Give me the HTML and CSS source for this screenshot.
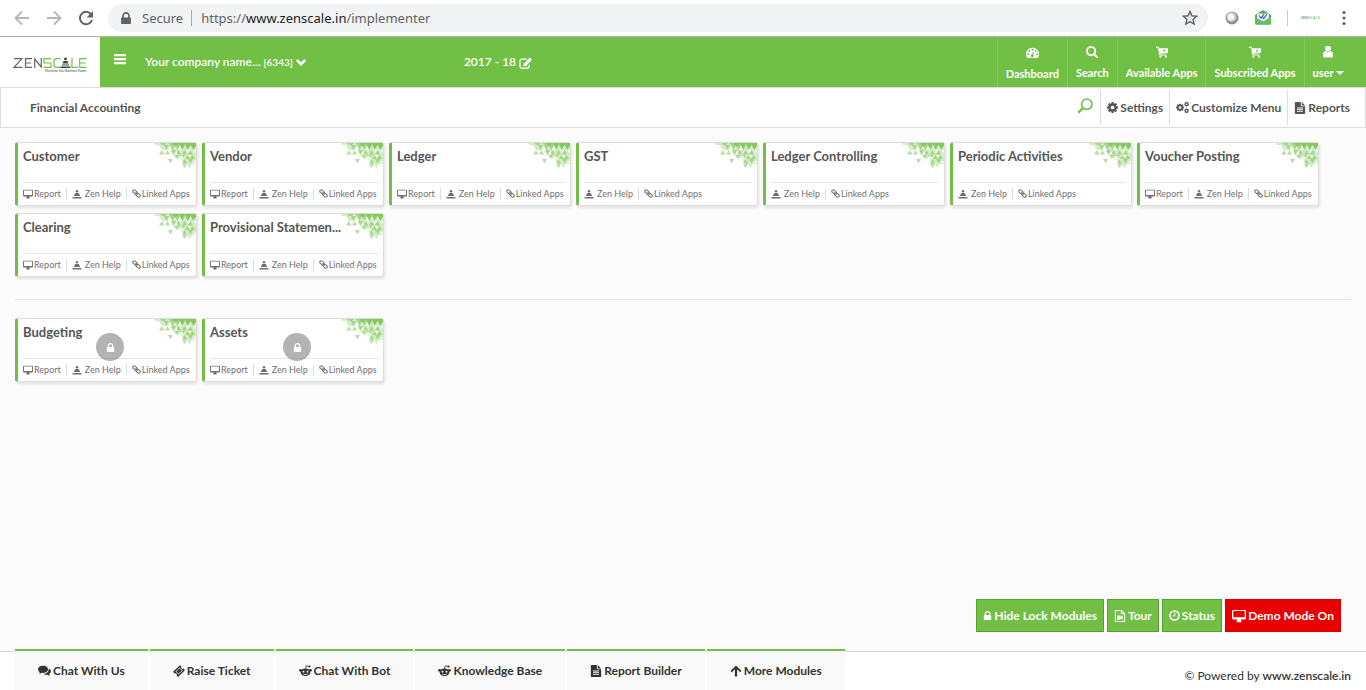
FILE: index.html
```html
<!DOCTYPE html>
<html lang="en">

<head>
    <meta charset="UTF-8">
    <meta name="viewport" content="width=device-width, initial-scale=1.0">
    <title>Zenscale - Financial Accounting</title>

    <link rel="stylesheet" href="styles.css">
</head>

<body>
    <!-- Icon set -->
    <svg class="sprite" aria-hidden="true">
        <symbol id="i-back" viewBox="0 0 16 16"><path d="M15 8H2M8 1.5 1.5 8 8 14.500" fill="none" stroke="currentColor" stroke-width="1.800"/></symbol>
        <symbol id="i-forward" viewBox="0 0 16 16"><path d="M1 8h13M8 1.500 14.500 8 8 14.500" fill="none" stroke="currentColor" stroke-width="1.800"/></symbol>
        <symbol id="i-reload" viewBox="0 0 16 16"><path d="M13.200 4.500A6.200 6.200 0 1 0 14 10" fill="none" stroke="currentColor" stroke-width="2"/><path d="M15 1v6.500H8.500z"/></symbol>
        <symbol id="i-star" viewBox="0 0 16 16"><path d="m8 1.500 1.900 4.300 4.700.5-3.500 3.100 1 4.600L8 11.600 3.900 14l1-4.600-3.500-3.100 4.700-.5z" fill="none" stroke="currentColor" stroke-width="1.400"/></symbol>
        <symbol id="i-ball" viewBox="0 0 14 14"><circle cx="7" cy="7" r="6.500" fill="#8d8d8d"/><circle cx="6.500" cy="6" r="5" fill="#c9c9c9"/><circle cx="6" cy="6" r="3.300" fill="#f6f6f6"/></symbol>
        <symbol id="i-mail" viewBox="0 0 16 16"><path d="M0 5 8 0l8 5v8.500q0 1-1 1H1q-1 0-1-1z" fill="#4cae50"/><path d="M2 3.500h12v6l-6 3-6-3z" fill="#e9ecf7"/><path d="m4 5.500 2 2.500 3-4M7.500 7 8.700 8.500l3.300-4.500" fill="none" stroke="#4a5bd0" stroke-width="1.200"/><path d="m0 7 8 4.500L16 7v6.500q0 1-1 1H1q-1 0-1-1z" fill="#5fbf63"/></symbol>
        <symbol id="i-dots" viewBox="0 0 4 16"><circle cx="2" cy="2.500" r="1.600"/><circle cx="2" cy="8" r="1.600"/><circle cx="2" cy="13.500" r="1.600"/></symbol>
        <symbol id="i-bars" viewBox="0 0 12 12"><path d="M0 1h12v2.300H0zM0 5h12v2.300H0zM0 9h12v2.300H0z"/></symbol>
        <symbol id="i-chevron" viewBox="0 0 12 12"><path d="M0 4.800 2.100 2.500 6 6.200 9.900 2.500 12 4.800l-6 6z"/></symbol>
        <symbol id="i-caret" viewBox="0 0 8 8"><path d="M0 2h8L4 6z"/></symbol>
        <symbol id="i-edit" viewBox="0 0 16 16"><path d="M9.500 2.500H3.200Q1.200 2.500 1.200 4.500v7.300q0 2 2 2h7.300q2 0 2-2V9.500" fill="none" stroke="currentColor" stroke-width="1.500"/><path d="m5.500 11.500.3-3.200 7-7q.6-.6 1.200 0l1.500 1.500q.6.600 0 1.200l-7 7z"/></symbol>
        <symbol id="i-dashboard" viewBox="0 0 16 14"><path fill-rule="evenodd" d="M8 1a8 8 0 0 1 6.700 12.300q-.3.500-.9.500H2.200q-.6 0-.9-.5A8 8 0 0 1 8 1zM8 2.300a1.200 1.200 0 1 0 0 2.400 1.200 1.200 0 0 0 0-2.400zM4 4a1.200 1.200 0 1 0 0 2.400A1.200 1.200 0 0 0 4 4zm8 0a1.200 1.200 0 1 0 0 2.400A1.200 1.200 0 0 0 12 4zM2.400 8a1.200 1.200 0 1 0 0 2.400 1.200 1.200 0 0 0 0-2.400zm11.200 0a1.200 1.200 0 1 0 0 2.400 1.200 1.200 0 0 0 0-2.400zM8.600 6l-1 3.300a1.800 1.800 0 1 0 1.300.4l1-3.300z"/></symbol>
        <symbol id="i-search" viewBox="64 128 1664 1664"><path d="M1216 832q0-185-131.500-316.500t-316.500-131.500-316.500 131.500-131.500 316.500 131.500 316.500 316.500 131.500 316.500-131.500 131.500-316.500zm512 832q0 52-38 90t-90 38q-54 0-90-38l-343-342q-179 124-399 124-143 0-273.500-55.500t-225-150-150-225-55.500-273.500 55.500-273.500 150-225 225-150 273.500-55.500 273.500 55.500 225 150 150 225 55.500 273.500q0 220-124 399l343 343q37 37 37 90z"/></symbol>
        <symbol id="i-find" viewBox="0 0 16 16"><circle cx="9.800" cy="6.200" r="5.200" fill="none" stroke="currentColor" stroke-width="1.600"/><path d="m6 10-4.700 4.700" fill="none" stroke="currentColor" stroke-width="2.400"/></symbol>
        <symbol id="i-cart" viewBox="0 0 14 14"><path fill-rule="evenodd" d="M0 1h2.600q.6 0 .7.600l.2.900H13.500q.5 0 .5.500v4.500q0 .5-.5.600L5 9.100l.1.900H12.500v1.200H4.400q-.4 0-.5-.4L2.200 2.200H0zM9 3.600v1.300H7.700v.8H9V7h.8V5.700h1.300v-.8H9.800V3.600z"/><circle cx="5.200" cy="12.600" r="1.200"/><circle cx="11.700" cy="12.600" r="1.200"/></symbol>
        <symbol id="i-cart-down" viewBox="0 0 14 14"><path fill-rule="evenodd" d="M0 1h2.600q.6 0 .7.600l.2.900H13.500q.5 0 .5.500v4.500q0 .5-.5.600L5 9.100l.1.900H12.500v1.200H4.400q-.4 0-.5-.4L2.200 2.200H0zM9 3.500v1.800H7.700L9.400 7.200l1.700-1.900H9.800V3.500z"/><circle cx="5.200" cy="12.600" r="1.200"/><circle cx="11.700" cy="12.600" r="1.200"/></symbol>
        <symbol id="i-user" viewBox="128 192 1536 1536"><path d="M1536 1399q0 109-62.500 187t-150.500 78h-854q-88 0-150.500-78t-62.500-187q0-85 8.500-160.500t31.500-152 58.500-131 94-89 134.500-34.500q131 128 313 128t313-128q76 0 134.500 34.500t94 89 58.500 131 31.500 152 8.500 160.500zm-256-887q0 159-112.500 271.500t-271.500 112.500-271.500-112.500-112.500-271.500 112.500-271.500 271.500-112.500 271.500 112.500 112.500 271.500z"/></symbol>
        <symbol id="i-cog" viewBox="128 128 1536 1536"><path d="M1152 896q0-106-75-181t-181-75-181 75-75 181 75 181 181 75 181-75 75-181zm512-109v222q0 12-8 23t-20 13l-185 28q-19 54-39 91 35 50 107 138 10 12 10 25t-9 23q-27 37-99 108t-94 71q-12 0-26-9l-138-108q-44 23-91 38-16 136-29 186-7 28-36 28h-222q-14 0-24.500-8.500t-11.500-21.500l-28-184q-49-16-90-37l-141 107q-10 9-25 9-14 0-25-11-126-114-165-168-7-10-7-23 0-12 8-23 15-21 51-66.500t54-70.500q-27-50-41-99l-183-27q-13-2-21-12.500t-8-23.500v-222q0-12 8-23t19-13l186-28q14-46 39-92-40-57-107-138-10-12-10-24 0-10 9-23 26-36 98.500-107.500t94.500-71.500q13 0 26 10l138 107q44-23 91-38 16-136 29-186 7-28 36-28h222q14 0 24.500 8.500t11.500 21.500l28 184q49 16 90 37l142-107q9-9 24-9 13 0 25 10 129 119 165 170 7 8 7 22 0 12-8 23-15 21-51 66.500t-54 70.500q26 50 41 98l183 28q13 2 21 12.500t8 23.500z"/></symbol>
        <symbol id="i-cogs" viewBox="0 0 16 14"><use href="#i-cog" x="0" y="2" width="10" height="10"/><use href="#i-cog" x="10" y="0" width="6" height="6"/><use href="#i-cog" x="10" y="8" width="6" height="6"/></symbol>
        <symbol id="i-file" viewBox="0 0 12 14"><path fill-rule="evenodd" d="M0 .8Q0 0 .8 0H7v4.200q0 .8.800.8H12v8.200q0 .8-.8.800H.8q-.8 0-.8-.8zM2.500 6.500v1h7v-1zm0 2v1h7v-1zm0 2v1h7v-1zM8 0l4 4H8z"/></symbol>
        <symbol id="i-desktop" viewBox="0 0 16 14"><path fill-rule="evenodd" d="M1.300 0h13.400Q16 0 16 1.300v8.400q0 1.300-1.300 1.300H10q0 1 .8 1.800v.7q0 .5-.5.500H5.700q-.5 0-.5-.5v-.7Q6 12 6 11H1.300Q0 11 0 9.700V1.300Q0 0 1.300 0zm.2 1.200v7.300h13V1.200z"/></symbol>
        <symbol id="i-zen" viewBox="0 0 10 10"><circle cx="5" cy="2.200" r="1.200"/><path d="M3 4h4v1.500h1V7H2V5.500h1zM.5 8h9v1.500h-9z"/></symbol>
        <symbol id="i-link" viewBox="0 0 16 16"><g fill="none" stroke="currentColor" stroke-width="1.900"><rect x="1" y="2.500" width="8.500" height="5" rx="2.500" transform="rotate(40 5 5)"/><rect x="6.500" y="8.500" width="8.500" height="5" rx="2.500" transform="rotate(40 11 11)"/><path d="m6 6 4 4"/></g></symbol>
        <symbol id="i-lock" viewBox="320 128 1152 1408"><path d="M640 768h512v-192q0-106-75-181t-181-75-181 75-75 181v192zm832 96v576q0 40-28 68t-68 28h-960q-40 0-68-28t-28-68v-576q0-40 28-68t68-28h32v-192q0-184 132-316t316-132 316 132 132 316v192h32q40 0 68 28t28 68z"/></symbol>
        <symbol id="i-movie" viewBox="0 0 12 14"><path d="M.6.600H8l3.400 3.400v9.400H.6zM7.600.600v3.800h3.800" fill="none" stroke="currentColor" stroke-width="1.200"/><path d="M2.500 6.500h4v1.700l2.700-1.700v5L6.500 9.800v1.700h-4z"/></symbol>
        <symbol id="i-clock" viewBox="0 0 14 14"><circle cx="7" cy="7" r="5.700" fill="none" stroke="currentColor" stroke-width="2"/><path d="M7.500 3.500v4H4.500" fill="none" stroke="currentColor" stroke-width="1.200"/></symbol>
        <symbol id="i-chat" viewBox="0 0 16 14"><path d="M6.200 1c3.400 0 6.200 2 6.200 4.500S9.600 10 6.200 10q-.8 0-1.500-.1Q3 11.200 1 11.400q1-.9 1.200-2.200Q0 7.800 0 5.500C0 3 2.800 1 6.200 1z"/><path d="M13.400 4.500Q16 5.800 16 8q0 2.200-2.200 3.500.2 1.200 1.200 2.100-2-.2-3.700-1.400-2.900.3-4.800-.9 6.300-.4 6.900-6.800z"/></symbol>
        <symbol id="i-ticket" viewBox="0 0 16 16"><path fill-rule="evenodd" d="m9.600.5 1.500 1.500q-.6 1.300.4 2.300t2.400.5l1.600 1.600q.4.400 0 .8l-8.300 8.300q-.4.400-.8 0l-1.500-1.500q.6-1.400-.4-2.400t-2.400-.4L.5 9.600q-.4-.4 0-.8L8.800.500q.4-.4.800 0zM8.900 3.200 3.300 8.800l4 4 5.600-5.600zm0 1.200 2.800 2.800-4.400 4.400L4.500 8.800z"/></symbol>
        <symbol id="i-reddit" viewBox="0 0 16 14"><path fill-rule="evenodd" d="M8 4.500c3.500 0 6 1.900 6 4.500s-2.500 4.700-6 4.700S2 11.600 2 9s2.500-4.500 6-4.500zM5.500 7.200a1.200 1.200 0 1 0 0 2.400 1.200 1.200 0 0 0 0-2.400zm5 0a1.200 1.200 0 1 0 0 2.400 1.200 1.200 0 0 0 0-2.400zM5 10.700q3 2 6 0l-.5 1.200q-2.500 1.200-5 0z"/><circle cx="1.900" cy="6.800" r="1.700"/><circle cx="14.100" cy="6.800" r="1.700"/><path d="m8 5 .8-3.700L12.500 2" fill="none" stroke="currentColor"/><circle cx="13" cy="2" r="1.300"/></symbol>
        <symbol id="i-up" viewBox="0 0 14 14"><path d="M7 .5 13.500 7 12 8.600 8.300 5v8.500H5.700V5L2 8.600.500 7z"/></symbol>
        <symbol id="i-pattern" viewBox="0 0 42 27">
            <!-- backing tint -->
            <path opacity=".3" d="M0 0h42v2H1zM5 2h37v5H8zM17 7h25v5H19zM22 12h20v4H24zM27 16h15v5H30zM33 21h5l-2.500 4z"/>
            <!-- mid green triangles -->
            <path opacity=".5" d="M6 0h7l-2 2H8zM14 0h28v2H16zM10 2h5l-2.500 5zM16 2h5l-2.500 5zM21 2h5l-2.500 5zM26 2h5l-2.500 5zM31 2h5l-2.500 5zM37 2h5l-2.500 5zM5 11.500 8 7l2.500 4.500zM11 11.500 13.500 7l2.500 4.500zM17 7h5l-2.500 4.500zM22 11.500 24.500 7l2.500 4.500zM28 11.500 30.500 7l2.500 4.500zM34 11.500 36.500 7l2.500 4.500zM20 12h5l-2.500 4zM26 12h5l-2.500 4zM31 16l2.500-4 2.500 4zM36 16l2.500-4 2.500 4zM14 16h5l-2.500 4.500zM28 20.500l2.500-4 2.500 4zM34 16h5l-2.500 4.500zM28 21h5l-2.500 4z"/>
            <!-- dark corner -->
            <path opacity=".6" d="M18 0h7l-3.500 4zM25 0h6l-3 6zM31 0h11v3l-3 3-2.500-4L34 6z"/>
            <!-- light gaps -->
            <path fill="#fff" opacity=".8" d="M13.500 7 16 3l2 4zM24 7l2-4 2 4zM20 11.500 22.500 8l1 3.500zM33 7h3l-1.500 3zM39 7h3v3zM25 16l3-4 2 4zM34 12h3l-1.500 3zM39 20l2-3 1 3z"/>
        </symbol>
    </svg>

    <!-- Browser toolbar -->
    <div class="browser-bar">
        <button class="browser-button muted" aria-label="Back"><svg class="icon-16"><use href="#i-back"/></svg></button>
        <button class="browser-button muted" aria-label="Forward"><svg class="icon-16"><use href="#i-forward"/></svg></button>
        <button class="browser-button" aria-label="Reload"><svg class="icon-16"><use href="#i-reload"/></svg></button>
        <div class="address">
            <svg class="icon-12"><use href="#i-lock"/></svg>
            <span class="secure">Secure</span>
            <span class="url">https://<b>www.zenscale.in</b>/implementer</span>
            <button class="browser-button star" aria-label="Bookmark"><svg class="icon-16"><use href="#i-star"/></svg></button>
        </div>
        <div class="extensions">
            <svg class="icon-14"><use href="#i-ball"/></svg>
            <svg class="icon-16"><use href="#i-mail"/></svg>
            <span class="profile">ZEN<i>SCALE</i></span>
            <button class="browser-button" aria-label="Menu"><svg class="icon-16"><use href="#i-dots"/></svg></button>
        </div>
    </div>

    <header class="header">
        <a class="logo" href="#" aria-label="Zenscale">
            <svg viewBox="0 0 74 18" width="74" height="18" fill="none" stroke-width="1.200">
                <path fill="none" stroke="#666" d="M1 2.700h8L1 11.300h8.500M19 2.700h-6.500v8.600H19M12.500 7H18M21.700 12V3l6.600 8V2"/>
                <path fill="none" stroke="#71bf44" d="M38 2.700h-7V7h7v4.300h-7.500M47.500 2.700h-4q-2.500 0-2.500 2.500v3.600q0 2.500 2.500 2.500h4M59 2v9.300h6M73.500 2.700h-6.800v8.600h6.800M66.700 7h6"/>
                <path fill="#444" d="M52.500 1.500a1.400 1.400 0 1 1 0 2.800 1.400 1.400 0 0 1 0-2.800zM50.500 5h4l1 2.500h-6zM49 8.500h7v1h-7zM47.500 10.500h10V12h-10z"/>
                <text class="logo-tagline" x="32" y="16">Maximize Your Business Power</text>
            </svg>
        </a>
        <button class="menu-button" aria-label="Toggle menu"><svg class="icon-12"><use href="#i-bars"/></svg></button>
        <button class="company">Your company name... <small>[6343]</small> <svg class="icon-10"><use href="#i-chevron"/></svg></button>
        <button class="year">2017 - 18 <svg class="icon-13"><use href="#i-edit"/></svg></button>
        <nav class="top-nav">
            <a href="#"><svg class="icon-13"><use href="#i-dashboard"/></svg>Dashboard</a>
            <a href="#"><svg class="icon-12"><use href="#i-search"/></svg>Search</a>
            <a href="#"><svg class="icon-12"><use href="#i-cart"/></svg>Available Apps</a>
            <a href="#"><svg class="icon-12"><use href="#i-cart-down"/></svg>Subscribed Apps</a>
            <a href="#" class="user"><svg class="icon-12"><use href="#i-user"/></svg><span>user <svg class="icon-8"><use href="#i-caret"/></svg></span></a>
        </nav>
    </header>

    <div class="sub-header">
        <h1>Financial Accounting</h1>
        <button class="find" aria-label="Find"><svg class="icon-16"><use href="#i-find"/></svg></button>
        <nav class="sub-nav">
            <a href="#"><svg class="icon-11"><use href="#i-cog"/></svg>Settings</a>
            <a href="#"><svg class="icon-13"><use href="#i-cogs"/></svg>Customize Menu</a>
            <a href="#"><svg class="icon-12"><use href="#i-file"/></svg>Reports</a>
        </nav>
    </div>

    <main class="content">
        <div class="cards">
            <div class="card">
                <svg class="pattern"><use href="#i-pattern"/></svg>
                <h2>Customer</h2>
                <div class="card-links">
                    <a href="#"><svg class="icon-10"><use href="#i-desktop"/></svg>Report</a>
                    <a href="#" class="help"><svg class="icon-10"><use href="#i-zen"/></svg>Zen Help</a>
                    <a href="#"><svg class="icon-9"><use href="#i-link"/></svg>Linked Apps</a>
                </div>
            </div>
            <div class="card">
                <svg class="pattern"><use href="#i-pattern"/></svg>
                <h2>Vendor</h2>
                <div class="card-links">
                    <a href="#"><svg class="icon-10"><use href="#i-desktop"/></svg>Report</a>
                    <a href="#" class="help"><svg class="icon-10"><use href="#i-zen"/></svg>Zen Help</a>
                    <a href="#"><svg class="icon-9"><use href="#i-link"/></svg>Linked Apps</a>
                </div>
            </div>
            <div class="card">
                <svg class="pattern"><use href="#i-pattern"/></svg>
                <h2>Ledger</h2>
                <div class="card-links">
                    <a href="#"><svg class="icon-10"><use href="#i-desktop"/></svg>Report</a>
                    <a href="#" class="help"><svg class="icon-10"><use href="#i-zen"/></svg>Zen Help</a>
                    <a href="#"><svg class="icon-9"><use href="#i-link"/></svg>Linked Apps</a>
                </div>
            </div>
            <div class="card">
                <svg class="pattern"><use href="#i-pattern"/></svg>
                <h2>GST</h2>
                <div class="card-links">
                    <a href="#" class="help"><svg class="icon-10"><use href="#i-zen"/></svg>Zen Help</a>
                    <a href="#"><svg class="icon-9"><use href="#i-link"/></svg>Linked Apps</a>
                </div>
            </div>
            <div class="card">
                <svg class="pattern"><use href="#i-pattern"/></svg>
                <h2>Ledger Controlling</h2>
                <div class="card-links">
                    <a href="#" class="help"><svg class="icon-10"><use href="#i-zen"/></svg>Zen Help</a>
                    <a href="#"><svg class="icon-9"><use href="#i-link"/></svg>Linked Apps</a>
                </div>
            </div>
            <div class="card">
                <svg class="pattern"><use href="#i-pattern"/></svg>
                <h2>Periodic Activities</h2>
                <div class="card-links">
                    <a href="#" class="help"><svg class="icon-10"><use href="#i-zen"/></svg>Zen Help</a>
                    <a href="#"><svg class="icon-9"><use href="#i-link"/></svg>Linked Apps</a>
                </div>
            </div>
            <div class="card">
                <svg class="pattern"><use href="#i-pattern"/></svg>
                <h2>Voucher Posting</h2>
                <div class="card-links">
                    <a href="#"><svg class="icon-10"><use href="#i-desktop"/></svg>Report</a>
                    <a href="#" class="help"><svg class="icon-10"><use href="#i-zen"/></svg>Zen Help</a>
                    <a href="#"><svg class="icon-9"><use href="#i-link"/></svg>Linked Apps</a>
                </div>
            </div>
            <div class="card">
                <svg class="pattern"><use href="#i-pattern"/></svg>
                <h2>Clearing</h2>
                <div class="card-links">
                    <a href="#"><svg class="icon-10"><use href="#i-desktop"/></svg>Report</a>
                    <a href="#" class="help"><svg class="icon-10"><use href="#i-zen"/></svg>Zen Help</a>
                    <a href="#"><svg class="icon-9"><use href="#i-link"/></svg>Linked Apps</a>
                </div>
            </div>
            <div class="card">
                <svg class="pattern"><use href="#i-pattern"/></svg>
                <h2>Provisional Statemen...</h2>
                <div class="card-links">
                    <a href="#"><svg class="icon-10"><use href="#i-desktop"/></svg>Report</a>
                    <a href="#" class="help"><svg class="icon-10"><use href="#i-zen"/></svg>Zen Help</a>
                    <a href="#"><svg class="icon-9"><use href="#i-link"/></svg>Linked Apps</a>
                </div>
            </div>
        </div>

        <hr>

        <!-- Locked modules -->
        <div class="cards">
            <div class="card">
                <svg class="pattern"><use href="#i-pattern"/></svg>
                <h2>Budgeting</h2>
                <div class="card-links">
                    <a href="#"><svg class="icon-10"><use href="#i-desktop"/></svg>Report</a>
                    <a href="#" class="help"><svg class="icon-10"><use href="#i-zen"/></svg>Zen Help</a>
                    <a href="#"><svg class="icon-9"><use href="#i-link"/></svg>Linked Apps</a>
                </div>
                <span class="locked"><svg class="icon-9"><use href="#i-lock"/></svg></span>
            </div>
            <div class="card">
                <svg class="pattern"><use href="#i-pattern"/></svg>
                <h2>Assets</h2>
                <div class="card-links">
                    <a href="#"><svg class="icon-10"><use href="#i-desktop"/></svg>Report</a>
                    <a href="#" class="help"><svg class="icon-10"><use href="#i-zen"/></svg>Zen Help</a>
                    <a href="#"><svg class="icon-9"><use href="#i-link"/></svg>Linked Apps</a>
                </div>
                <span class="locked"><svg class="icon-9"><use href="#i-lock"/></svg></span>
            </div>
        </div>

        <div class="actions">
            <button><svg class="icon-9"><use href="#i-lock"/></svg>Hide Lock Modules</button>
            <button><svg class="icon-12"><use href="#i-movie"/></svg>Tour</button>
            <button><svg class="icon-11"><use href="#i-clock"/></svg>Status</button>
            <button class="demo"><svg class="icon-14"><use href="#i-desktop"/></svg>Demo Mode On</button>
        </div>
    </main>

    <footer class="footer">
        <nav class="tabs">
            <a href="#"><svg class="icon-13"><use href="#i-chat"/></svg>Chat With Us</a>
            <a href="#"><svg class="icon-12"><use href="#i-ticket"/></svg>Raise Ticket</a>
            <a href="#"><svg class="icon-13"><use href="#i-reddit"/></svg>Chat With Bot</a>
            <a href="#"><svg class="icon-13"><use href="#i-reddit"/></svg>Knowledge Base</a>
            <a href="#"><svg class="icon-12"><use href="#i-file"/></svg>Report Builder</a>
            <a href="#"><svg class="icon-12"><use href="#i-up"/></svg>More Modules</a>
        </nav>
        <p class="powered">© Powered by <a href="#">www.zenscale.in</a></p>
    </footer>
</body>

</html>
```
FILE: styles.css
```css
* {
    box-sizing: border-box;
}

body {
    margin: 0;
    min-height: 100vh;
    display: flex;
    flex-direction: column;
    background-color: #fbfbfb;
    font-family: Lato, "Liberation Sans", sans-serif;
    font-size: 12px;
    color: #555;
}

a {
    color: inherit;
    text-decoration: none;
    white-space: nowrap;
}

button {
    font: inherit;
    color: inherit;
    background: none;
    border: 0;
    padding: 0;
    cursor: pointer;
}

svg {
    fill: currentColor;
    flex: none;
}

.sprite {
    display: none;
}

.icon-8 { width: 8px; height: 8px; }
.icon-9 { width: 9px; height: 9px; }
.icon-10 { width: 10px; height: 10px; }
.icon-11 { width: 11px; height: 11px; }
.icon-12 { width: 12px; height: 12px; }
.icon-13 { width: 13px; height: 13px; }
.icon-14 { width: 14px; height: 14px; }
.icon-16 { width: 16px; height: 16px; }

/* Browser toolbar */
.browser-bar {
    height: 37px;
    padding: 0 14px;
    display: flex;
    align-items: center;
    gap: 16px;
    background-color: #fff;
    border-bottom: 1px solid #b0b0b0;
    font-family: "Noto Sans", sans-serif;
    font-size: 13px;
    color: #5f6368;
}

.browser-button {
    display: flex;
}

.muted {
    color: #b5b7b9;
}

.address {
    flex: 1;
    height: 28px;
    margin-left: -2px;
    margin-right: 1px;
    padding: 0 10px 0 12px;
    display: flex;
    align-items: center;
    border-radius: 14px;
    background-color: #f1f3f4;
}

.secure {
    margin-left: 10px;
    padding-right: 8px;
    border-right: 1px solid #a5a8ab;
    line-height: 16px;
}

.url {
    margin-left: 9px;
}

.url b {
    font-weight: 400;
    color: #202124;
}

.star {
    margin-left: auto;
}

.extensions {
    display: flex;
    align-items: center;
    gap: 16px;
}

.profile {
    padding-left: 13px;
    border-left: 1px solid #ccc;
    font-size: 4px;
    line-height: 16px;
}

.profile i {
    font-style: normal;
    color: #71bf44;
}

/* Green header */
.header {
    height: 50px;
    display: flex;
    background-color: #71bf44;
    color: #fff;
    font-weight: 700;
}

.logo {
    width: 100px;
    padding-top: 5px;
    display: flex;
    align-items: center;
    justify-content: center;
    background-color: #fff;
}

.logo-tagline {
    font-size: 3px;
    fill: #777;
    stroke: none;
}

.menu-button {
    width: 40px;
    padding-bottom: 4px;
}

.company {
    margin-left: 5px;
    padding-bottom: 2px;
    font-weight: 600;
}

.company small {
    font-size: 10px;
}

.year {
    margin-left: 158px;
    font-weight: 600;
}

.company svg,
.year svg {
    vertical-align: middle;
}

.top-nav {
    margin-left: auto;
    display: flex;
    font-size: 11px;
}

.top-nav a {
    padding: 9px 8px 0;
    display: flex;
    flex-direction: column;
    align-items: center;
    gap: 7px;
    border-left: 1px solid #82cb58;
    line-height: 16px;
}

.top-nav .user {
    padding-right: 22px;
}

/* White title bar */
.sub-header {
    height: 41px;
    padding: 0 15px 0 29px;
    display: flex;
    align-items: center;
    background-color: #fff;
    border: 1px solid #ddd;
}

h1 {
    margin: 0;
    font-size: 12px;
}

.find {
    margin-left: auto;
    margin-right: 7px;
    padding-bottom: 3px;
    display: flex;
    color: #71bf44;
}

.sub-nav {
    display: flex;
    font-weight: 700;
}

.sub-nav a {
    height: 35px;
    padding: 0 6px;
    display: flex;
    align-items: center;
    gap: 2px;
    border-left: 1px solid #ddd;
}

.sub-nav a:last-child {
    padding-right: 0;
}

/* Module cards */
.content {
    flex: 1;
    padding: 14px 15px 19px;
    display: flex;
    flex-direction: column;
}

.cards {
    display: flex;
    flex-wrap: wrap;
    gap: 7px 5px;
}

.card {
    position: relative;
    width: 182px;
    height: 64px;
    padding: 0 5px;
    display: flex;
    flex-direction: column;
    justify-content: space-between;
    background-color: #fff;
    border: 1px solid #ddd;
    border-left: 3px solid #71bf44;
    border-radius: 3px;
    box-shadow: 1px 2px 3px rgba(0, 0, 0, 0.1);
}

.pattern {
    position: absolute;
    top: 0;
    right: 0;
    width: 42px;
    height: 27px;
    color: #71bf44;
}

h2 {
    margin: 4px 0 0;
    font-size: 13px;
    line-height: 18px;
}

.card-links {
    height: 23px;
    padding-bottom: 1px;
    display: flex;
    align-items: center;
    border-top: 1px solid #e5e5e5;
    font-size: 9px;
    color: #707070;
}

.card-links a {
    height: 12px;
    display: flex;
    align-items: center;
    gap: 1px;
}

.card-links a + a {
    margin-left: 5px;
    padding-left: 5px;
    border-left: 1px solid #ddd;
}

.card-links .help {
    gap: 3px;
}

.locked {
    position: absolute;
    left: 78px;
    top: 14px;
    width: 28px;
    height: 28px;
    display: flex;
    align-items: center;
    justify-content: center;
    border-radius: 50%;
    background-color: rgba(128, 128, 128, 0.6);
    color: #fff;
}

hr {
    width: 100%;
    margin: 22px 0 18px;
    border: 0;
    border-top: 1px solid #e7e7e7;
}

.actions {
    margin-top: auto;
    margin-right: 10px;
    display: flex;
    justify-content: flex-end;
    gap: 3px;
}

.actions button {
    height: 33px;
    padding: 0 6px;
    display: flex;
    align-items: center;
    gap: 2px;
    background-color: #71bf44;
    border: 1px solid #5aa02f;
    color: #fff;
    font-weight: 700;
}

.actions .demo {
    background-color: #e90000;
    border-color: #d80000;
}

/* Footer */
.footer {
    height: 39px;
    padding: 0 15px;
    display: flex;
    justify-content: space-between;
    background-color: #fff;
    border-top: 1px solid #d5d5e0;
    color: #333;
}

.tabs {
    margin-top: -3px;
    display: flex;
    gap: 2px;
    font-weight: 700;
}

.tabs a {
    padding: 0 23px;
    display: flex;
    align-items: center;
    gap: 2px;
    background-color: #f9f9f9;
    border-top: 2px solid #71bf44;
}

.powered {
    margin: 15px 0 0;
    line-height: 18px;
}

.powered a {
    font-weight: 600;
}
```
